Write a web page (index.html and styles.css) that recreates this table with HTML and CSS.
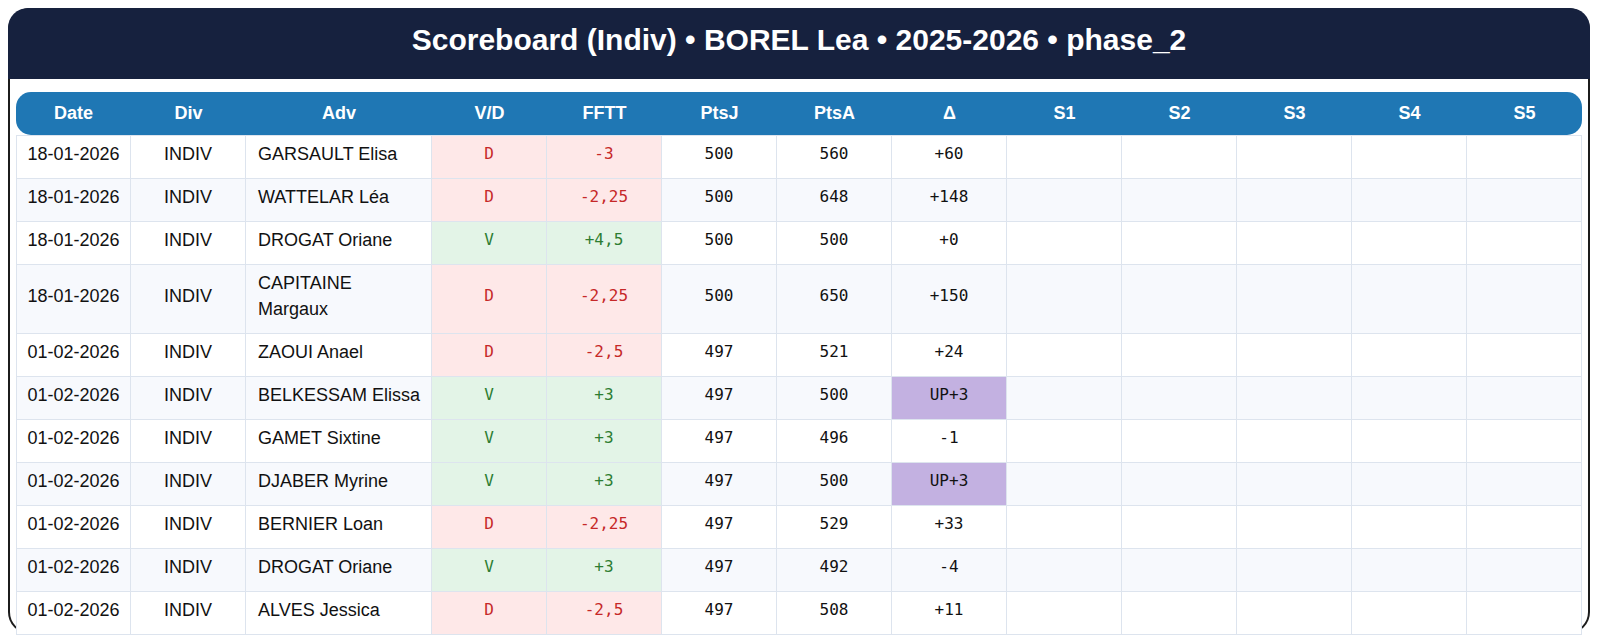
FILE: index.html
```html
<!DOCTYPE html>
<html lang="fr">
<head>
<meta charset="utf-8">
<title>Scoreboard</title>
<link rel="stylesheet" href="styles.css">
</head>
<body>
<div class="card">
  <div class="card-header">Scoreboard (Indiv) • BOREL Lea • 2025-2026 • phase_2</div>
  <div class="card-body">
    <table class="board">
      <colgroup>
        <col class="c-std"><col class="c-std"><col class="c-adv"><col class="c-std"><col class="c-std"><col class="c-std"><col class="c-std"><col class="c-std"><col class="c-std"><col class="c-std"><col class="c-std"><col class="c-std"><col class="c-std">
      </colgroup>
      <thead>
        <tr><th>Date</th><th>Div</th><th>Adv</th><th>V/D</th><th>FFTT</th><th>PtsJ</th><th>PtsA</th><th>Δ</th><th>S1</th><th>S2</th><th>S3</th><th>S4</th><th>S5</th></tr>
      </thead>
      <tbody>
        <tr><td>18-01-2026</td><td>INDIV</td><td class="adv">GARSAULT Elisa</td><td class="mono loss">D</td><td class="mono loss">-3</td><td class="mono">500</td><td class="mono">560</td><td class="mono">+60</td><td></td><td></td><td></td><td></td><td></td></tr>
        <tr><td>18-01-2026</td><td>INDIV</td><td class="adv">WATTELAR Léa</td><td class="mono loss">D</td><td class="mono loss">-2,25</td><td class="mono">500</td><td class="mono">648</td><td class="mono">+148</td><td></td><td></td><td></td><td></td><td></td></tr>
        <tr><td>18-01-2026</td><td>INDIV</td><td class="adv">DROGAT Oriane</td><td class="mono win">V</td><td class="mono win">+4,5</td><td class="mono">500</td><td class="mono">500</td><td class="mono">+0</td><td></td><td></td><td></td><td></td><td></td></tr>
        <tr><td>18-01-2026</td><td>INDIV</td><td class="adv">CAPITAINE Margaux</td><td class="mono loss">D</td><td class="mono loss">-2,25</td><td class="mono">500</td><td class="mono">650</td><td class="mono">+150</td><td></td><td></td><td></td><td></td><td></td></tr>
        <tr><td>01-02-2026</td><td>INDIV</td><td class="adv">ZAOUI Anael</td><td class="mono loss">D</td><td class="mono loss">-2,5</td><td class="mono">497</td><td class="mono">521</td><td class="mono">+24</td><td></td><td></td><td></td><td></td><td></td></tr>
        <tr><td>01-02-2026</td><td>INDIV</td><td class="adv">BELKESSAM Elissa</td><td class="mono win">V</td><td class="mono win">+3</td><td class="mono">497</td><td class="mono">500</td><td class="mono up">UP+3</td><td></td><td></td><td></td><td></td><td></td></tr>
        <tr><td>01-02-2026</td><td>INDIV</td><td class="adv">GAMET Sixtine</td><td class="mono win">V</td><td class="mono win">+3</td><td class="mono">497</td><td class="mono">496</td><td class="mono">-1</td><td></td><td></td><td></td><td></td><td></td></tr>
        <tr><td>01-02-2026</td><td>INDIV</td><td class="adv">DJABER Myrine</td><td class="mono win">V</td><td class="mono win">+3</td><td class="mono">497</td><td class="mono">500</td><td class="mono up">UP+3</td><td></td><td></td><td></td><td></td><td></td></tr>
        <tr><td>01-02-2026</td><td>INDIV</td><td class="adv">BERNIER Loan</td><td class="mono loss">D</td><td class="mono loss">-2,25</td><td class="mono">497</td><td class="mono">529</td><td class="mono">+33</td><td></td><td></td><td></td><td></td><td></td></tr>
        <tr><td>01-02-2026</td><td>INDIV</td><td class="adv">DROGAT Oriane</td><td class="mono win">V</td><td class="mono win">+3</td><td class="mono">497</td><td class="mono">492</td><td class="mono">-4</td><td></td><td></td><td></td><td></td><td></td></tr>
        <tr><td>01-02-2026</td><td>INDIV</td><td class="adv">ALVES Jessica</td><td class="mono loss">D</td><td class="mono loss">-2,5</td><td class="mono">497</td><td class="mono">508</td><td class="mono">+11</td><td></td><td></td><td></td><td></td><td></td></tr>
      </tbody>
    </table>
  </div>
</div>
</body>
</html>
```
FILE: styles.css
```css
html, body {
  margin: 0;
  padding: 0;
  background: #ffffff;
}
body {
  padding: 8px;
  font-family: "Liberation Sans", Arial, sans-serif;
  color: #111111;
}
.card {
  box-sizing: border-box;
  height: calc(100vh - 16px);
  border: 2px solid #1c1c1c;
  border-radius: 22px;
  background: #ffffff;
}
.card-header {
  background: #16213e;
  color: #ffffff;
  font-weight: bold;
  font-size: 30px;
  line-height: 36px;
  text-align: center;
  padding: 14px 10px 21px;
  border-radius: 20px 20px 0 0;
  margin: -2px -2px 0;
}
.card-body {
  padding: 13px 6px 0;
}
.board {
  width: 100%;
  table-layout: fixed;
  border-collapse: separate;
  border-spacing: 0;
  font-size: 18px;
}
.c-std { width: 115px; }
.c-adv { width: 186px; }
.board th {
  background: #1f77b4;
  color: #ffffff;
  font-weight: bold;
  font-size: 18px;
  line-height: 27px;
  padding: 8px 4px;
  text-align: center;
}
.board th:first-child { border-radius: 15px 0 0 15px; }
.board th:last-child { border-radius: 0 15px 15px 0; }
.board td {
  text-align: center;
  line-height: 26px;
  padding: 5px 6px 11px;
  border-right: 1px solid #dde4ee;
  border-bottom: 1px solid #dde4ee;
  background: #ffffff;
  vertical-align: middle;
}
.board td:first-child { border-left: 1px solid #dde4ee; }
.board tbody tr:first-child td { border-top: 1px solid #dde4ee; }
.board tbody tr:nth-child(even) td { background: #f7f9fd; }
.board td.adv {
  text-align: left;
  padding-left: 12px;
  padding-right: 10px;
}
.board td.mono {
  font-family: "DejaVu Sans Mono", monospace;
  font-size: 16px;
}
.board td.loss,
.board tbody tr:nth-child(even) td.loss {
  background: #fee8e8;
  color: #c62828;
}
.board td.win,
.board tbody tr:nth-child(even) td.win {
  background: #e3f4e7;
  color: #2e7d32;
}
.board td.up,
.board tbody tr:nth-child(even) td.up {
  background: #c3b1e1;
}
```
